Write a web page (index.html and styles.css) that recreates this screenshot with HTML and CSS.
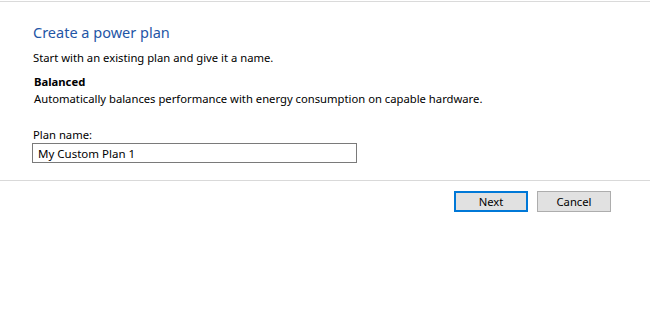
FILE: index.html
```html
<!DOCTYPE html>
<html lang="en">
<head>
  <meta charset="UTF-8" />
  <meta name="viewport" content="width=device-width, initial-scale=1.0" />
  <title>Create a power plan</title>
  <link rel="stylesheet" href="styles.css">
</head>
<body>
  <div class="window">
    <div class="content">
      <h1 class="title">Create a power plan</h1>
      <p class="intro">Start with an existing plan and give it a name.</p>

      <div class="plan">
        <div class="plan-name">Balanced</div>
        <div class="plan-desc">Automatically balances performance with energy consumption on capable hardware.</div>
      </div>

      <label class="field-label" for="planName">Plan name:</label>
      <input class="field" id="planName" type="text" value="My Custom Plan 1">
    </div>

    <div class="actions">
      <button class="btn btn-default">Next</button>
      <button class="btn">Cancel</button>
    </div>
  </div>
</body>
</html>
```

FILE: styles.css
```css
* {
  margin: 0;
  padding: 0;
  box-sizing: border-box;
}

body {
  font-family: 'Noto Sans', 'Segoe UI', sans-serif;
  font-size: 11.25px;
  color: #000;
  background: #fff;
  height: 100vh;
  overflow: hidden;
}

.window {
  margin-top: 1px;
  border-top: 1px solid #dadada;
}

.content {
  padding: 20px 33px 17px 32px;
  border-bottom: 1px solid #d9d9d9;
}

.title {
  font-size: 14.5px;
  font-weight: normal;
  line-height: 20px;
  color: #1f56a6;
  padding-left: 1px;
}

.intro {
  line-height: 17px;
  margin-top: 7px;
  padding-left: 1px;
}

.plan {
  margin-top: 7px;
  padding-left: 2px;
  line-height: 17px;
}

.plan-name {
  font-weight: bold;
}

.field-label {
  display: block;
  margin-top: 19px;
  line-height: 17px;
  padding-left: 1px;
}

.field {
  display: block;
  width: 325px;
  height: 20px;
  border: 1px solid #7a7a7a;
  padding: 0 5px;
  font: inherit;
  font-size: 11.5px;
  color: #000;
  outline: none;
}

.actions {
  display: flex;
  justify-content: flex-end;
  gap: 9px;
  padding: 10px 39px 0 0;
}

.btn {
  width: 74px;
  height: 21px;
  font: inherit;
  color: #000;
  background: #e1e1e1;
  border: 1px solid #adadad;
  cursor: pointer;
}

.btn-default {
  border: 2px solid #0078d7;
}
```
